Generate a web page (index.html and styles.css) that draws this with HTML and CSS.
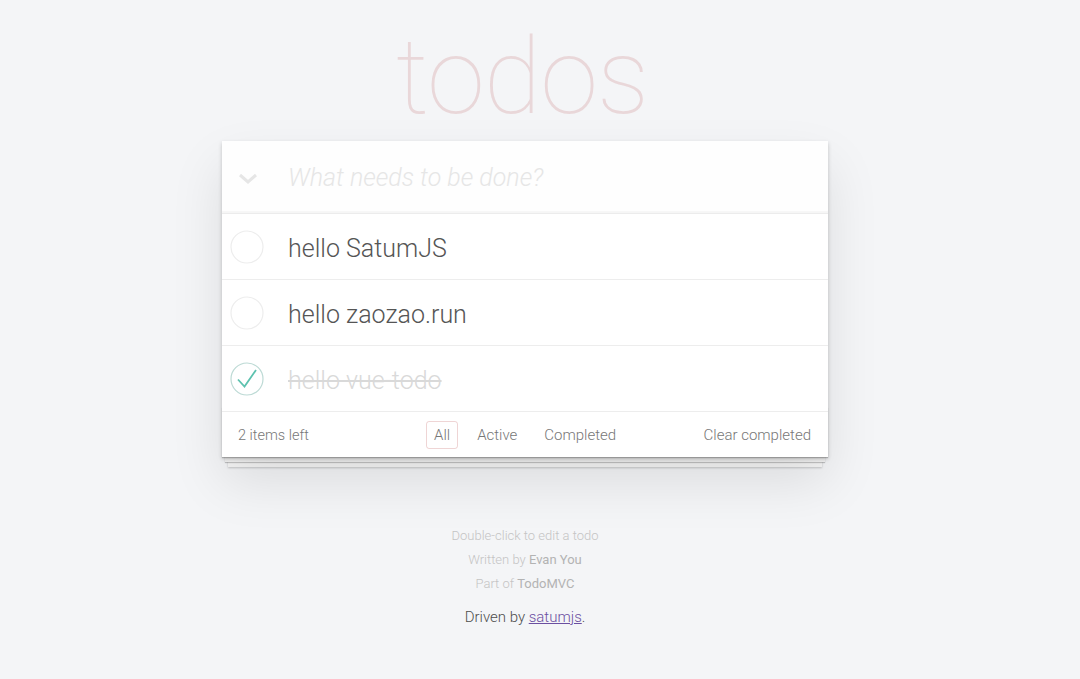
FILE: index.html
```html
<!DOCTYPE html>
<html lang="en">
  <head>
    <meta charset="UTF-8" />
    <meta name="viewport" content="width=device-width, initial-scale=1.0" />
    <title>todos</title>
    <link rel="stylesheet" href="styles.css">
  </head>
  <body>
    <section class="todoapp">
      <header class="header">
        <h1 class="title">todos</h1>
      </header>

      <div class="card">
        <div class="new-row">
          <svg class="toggle-all" width="20" height="12" viewBox="0 0 20 12">
            <polyline points="2,2 10,9 18,2" fill="none" stroke="#e6e6e6" stroke-width="3" />
          </svg>
          <input class="new-todo" placeholder="What needs to be done?" />
        </div>

        <ul class="todo-list">
          <li class="todo">
            <svg class="check" width="34" height="34" viewBox="0 0 34 34">
              <circle cx="17" cy="17" r="16" fill="none" stroke="#ededed" stroke-width="1.2" />
            </svg>
            <label>hello SatumJS</label>
          </li>
          <li class="todo">
            <svg class="check" width="34" height="34" viewBox="0 0 34 34">
              <circle cx="17" cy="17" r="16" fill="none" stroke="#ededed" stroke-width="1.2" />
            </svg>
            <label>hello zaozao.run</label>
          </li>
          <li class="todo done">
            <svg class="check" width="34" height="34" viewBox="0 0 34 34">
              <circle cx="17" cy="17" r="16" fill="none" stroke="#bddad5" stroke-width="1.2" />
              <polyline points="8,17.5 14.5,24.5 26,8" fill="none" stroke="#5dc2af" stroke-width="1.8" />
            </svg>
            <label>hello vue-todo</label>
          </li>
        </ul>

        <footer class="footer">
          <span class="count">2 items left</span>
          <ul class="filters">
            <li><a href="#" class="selected">All</a></li>
            <li><a href="#">Active</a></li>
            <li><a href="#">Completed</a></li>
          </ul>
          <button class="clear">Clear completed</button>
        </footer>
      </div>
    </section>

    <footer class="info">
      <p>Double-click to edit a todo</p>
      <p>Written by <a href="#">Evan You</a></p>
      <p>Part of <a href="#">TodoMVC</a></p>
      <p class="driven">Driven by <a href="#">satumjs</a>.</p>
    </footer>
  </body>
</html>
```

FILE: styles.css
```css
html,
body {
  margin: 0;
  padding: 0;
}

body {
  background: #f4f5f7;
  font-family: Roboto, "Liberation Sans", sans-serif;
  font-weight: 300;
  color: #4d4d4d;
  padding-right: 30px;
}

.todoapp {
  width: 606px;
  margin: 0 auto;
}

.header {
  height: 141px;
  display: flex;
  justify-content: center;
}

.title {
  margin: 25px 0 0 -6px;
  font-size: 105px;
  font-weight: 100;
  line-height: 1;
  color: rgba(175, 47, 47, 0.15);
  letter-spacing: -1px;
}

.card {
  position: relative;
  background: #fff;
  box-shadow: 0 2px 4px rgba(0, 0, 0, 0.2), 0 25px 50px 0 rgba(0, 0, 0, 0.1);
}

.new-row {
  height: 72px;
  display: flex;
  align-items: center;
  background: rgba(0, 0, 0, 0.003);
  box-shadow: inset 0 -2px 1px rgba(0, 0, 0, 0.03);
  border-bottom: 1px solid #ececec;
}

.toggle-all {
  width: 20px;
  margin: 4px 30px 0 16px;
}

.new-todo {
  flex: 1;
  border: none;
  outline: none;
  background: transparent;
  font-family: inherit;
  font-weight: 300;
  font-size: 25px;
  color: #4d4d4d;
  padding: 0;
}

.new-todo::placeholder {
  font-style: italic;
  color: #e6e6e6;
}

.todo-list {
  list-style: none;
  margin: 0;
  padding: 0;
}

.todo {
  height: 65px;
  display: flex;
  align-items: center;
  border-bottom: 1px solid #ededed;
}

.check {
  margin: 0 24px 0 8px;
}

.todo label {
  padding-top: 3px;
  font-size: 25px;
  color: #555;
}

.todo.done label {
  color: #d9d9d9;
  text-decoration: line-through;
}

.footer {
  position: relative;
  height: 45px;
  display: flex;
  align-items: center;
  padding: 0 17px 0 16px;
  font-size: 15px;
  color: #777;
}

.footer::before {
  content: "";
  position: absolute;
  right: 0;
  bottom: 0;
  left: 0;
  height: 50px;
  overflow: hidden;
  z-index: -1;
  box-shadow: 0 1px 1px rgba(0, 0, 0, 0.2), 0 8px 0 -3px #f6f6f6,
    0 9px 1px -3px rgba(0, 0, 0, 0.2), 0 16px 0 -6px #f6f6f6,
    0 17px 2px -6px rgba(0, 0, 0, 0.2);
}

.count {
  width: 170px;
  padding-top: 1px;
  font-size: 14.5px;
}

.filters {
  flex: 1;
  display: flex;
  list-style: none;
  margin: 0;
  padding: 0 0 0 18px;
  gap: 11px;
}

.filters a {
  display: block;
  padding: 4px 7px;
  border: 1px solid transparent;
  border-radius: 3px;
  color: inherit;
  text-decoration: none;
}

.filters a.selected {
  border-color: rgba(175, 47, 47, 0.2);
}

.clear {
  border: none;
  background: none;
  padding: 0;
  font-family: inherit;
  font-weight: 300;
  font-size: 15px;
  color: #777;
}

.info {
  margin-top: 67px;
  text-align: center;
  font-size: 13px;
  color: #c4c4c4;
}

.info p {
  margin: 0;
  line-height: 24px;
}

.info a {
  color: #b3b3b3;
  font-weight: 400;
  text-decoration: none;
}

.info .driven {
  margin-top: 9px;
  font-size: 15px;
  color: #4d4d4d;
}

.info .driven a {
  color: #6b4fa1;
  font-weight: 300;
  text-decoration: underline;
}
```
